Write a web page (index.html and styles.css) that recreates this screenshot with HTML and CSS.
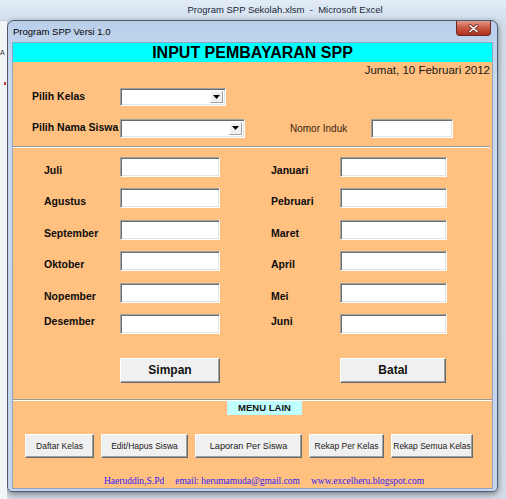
FILE: index.html
```html
<!DOCTYPE html>
<html lang="id">
<head>
  <meta charset="UTF-8" />
  <title>Program SPP Sekolah</title>
  <link rel="stylesheet" href="styles.css">
</head>
<body>
  <div class="excel-bar">Program SPP Sekolah.xlsm&nbsp; - &nbsp;Microsoft Excel</div>

  <div class="desk">
    <div class="sheet-edge">
      <span class="cell-a">A</span>
      <span class="red-dot"></span>
    </div>

    <div class="window">
      <div class="caption">
        <span class="caption-text">Program SPP Versi 1.0</span>
        <span class="close-btn">
          <svg width="11" height="9" viewBox="0 0 11 9">
            <path d="M2 1.5 L9 7.5 M9 1.5 L2 7.5" stroke="#6b2a22" stroke-width="3" stroke-linecap="round"/>
            <path d="M2 1.5 L9 7.5 M9 1.5 L2 7.5" stroke="#fff" stroke-width="1.6" stroke-linecap="round"/>
          </svg>
        </span>
      </div>

      <div class="form">
        <div class="header">INPUT PEMBAYARAN SPP</div>
        <div class="date">Jumat, 10 Februari 2012</div>

        <div class="pick-row row-kelas">
          <label class="lbl pick-lbl">Pilih Kelas</label>
          <div class="combo combo-kelas">
            <span class="combo-btn"><svg width="7" height="4" viewBox="0 0 7 4"><path d="M0 0 H7 L3.5 4 Z" fill="#000"/></svg></span>
          </div>
        </div>

        <div class="pick-row row-siswa">
          <label class="lbl pick-lbl">Pilih Nama Siswa</label>
          <div class="combo combo-siswa">
            <span class="combo-btn"><svg width="7" height="4" viewBox="0 0 7 4"><path d="M0 0 H7 L3.5 4 Z" fill="#000"/></svg></span>
          </div>
          <label class="nomor-lbl">Nomor Induk</label>
          <div class="tbox nomor-box"></div>
        </div>

        <div class="sep sep-top"></div>

        <div class="months">
          <label class="lbl mlbl">Juli</label><div class="tbox"></div>
          <label class="lbl mlbl right">Januari</label><div class="tbox"></div>

          <label class="lbl mlbl">Agustus</label><div class="tbox"></div>
          <label class="lbl mlbl right">Pebruari</label><div class="tbox"></div>

          <label class="lbl mlbl">September</label><div class="tbox"></div>
          <label class="lbl mlbl right">Maret</label><div class="tbox"></div>

          <label class="lbl mlbl">Oktober</label><div class="tbox"></div>
          <label class="lbl mlbl right">April</label><div class="tbox"></div>

          <label class="lbl mlbl">Nopember</label><div class="tbox"></div>
          <label class="lbl mlbl right">Mei</label><div class="tbox"></div>

          <label class="lbl mlbl up">Desember</label><div class="tbox"></div>
          <label class="lbl mlbl right up">Juni</label><div class="tbox"></div>
        </div>

        <div class="actions">
          <button class="btn btn-main btn-simpan">Simpan</button>
          <button class="btn btn-main btn-batal">Batal</button>
        </div>

        <div class="sep sep-bottom"></div>
        <div class="menu-lain">MENU LAIN</div>

        <div class="menu-buttons">
          <button class="btn btn-menu w-daftar">Daftar Kelas</button>
          <button class="btn btn-menu w-edit">Edit/Hapus Siswa</button>
          <button class="btn btn-menu w-laporan">Laporan Per Siswa</button>
          <button class="btn btn-menu w-rekap">Rekap Per Kelas</button>
          <button class="btn btn-menu w-semua">Rekap Semua Kelas</button>
        </div>

        <div class="footer">
          <span>Haeruddin,S.Pd</span>
          <span>email: herumamuda@gmail.com</span>
          <span>www.excelheru.blogspot.com</span>
        </div>
      </div>
    </div>
  </div>
</body>
</html>
```

FILE: styles.css
```css
* {
  box-sizing: border-box;
}
body {
  margin: 0;
  width: 506px;
  height: 499px;
  overflow: hidden;
  background: #d3dce8;
  font-family: 'Liberation Sans', Arial, sans-serif;
  color: #000;
}

.excel-bar {
  height: 20px;
  line-height: 20px;
  padding-left: 64px;
  text-align: center;
  font-size: 9.5px;
  color: #1b2737;
  background: linear-gradient(#e3ecf7, #d2dfee);
}

.desk {
  display: flex;
  height: 479px;
}
.sheet-edge {
  width: 7px;
  background: #f2f4f7;
  border-top: 1px solid #c9d2dd;
  position: relative;
  overflow: hidden;
}
.cell-a {
  position: absolute;
  top: 28px;
  left: 0;
  font-size: 7px;
  color: #333;
}
.red-dot {
  position: absolute;
  top: 61px;
  left: 4px;
  width: 2px;
  height: 3px;
  background: #c0392b;
}

.window {
  width: 491px;
  height: 472px;
  padding: 0 5px 4px;
  border: 1px solid #4f5b6a;
  border-radius: 7px 7px 5px 5px;
  background: linear-gradient(#b9cfea, #c9daef 60px, #c3d6ee);
  box-shadow: 0 2px 6px rgba(0, 0, 0, 0.45);
}
.caption {
  display: flex;
  justify-content: space-between;
  align-items: flex-start;
  height: 22px;
}
.caption-text {
  line-height: 22px;
  font-size: 9.5px;
  color: #000;
}
.close-btn {
  display: flex;
  align-items: center;
  justify-content: center;
  width: 35px;
  height: 15px;
  margin-right: 1px;
  border: 1px solid #6d2a22;
  border-top: none;
  border-radius: 0 0 4px 4px;
  background: linear-gradient(#e3998b, #c9563f 50%, #b0321f);
}

.form {
  height: 445px;
  background: #ffc080;
  box-shadow: 0 0 0 1px #8fa5c2;
}
.header {
  height: 19px;
  line-height: 19px;
  background: #00ffff;
  text-align: center;
  font-size: 16px;
  font-weight: bold;
}
.date {
  height: 16px;
  line-height: 16px;
  padding-right: 2px;
  text-align: right;
  font-size: 11.5px;
  color: #1a1a1a;
}

.lbl {
  font-size: 10.5px;
  font-weight: bold;
  color: #0d0d0d;
  line-height: 13px;
}

.pick-row {
  display: flex;
  align-items: center;
  padding-left: 19px;
}
.row-kelas {
  margin-top: 10px;
  height: 18px;
}
.row-siswa {
  margin-top: 12px;
  height: 20px;
}
.pick-lbl {
  width: 88px;
  padding-bottom: 2px;
}

.combo {
  position: relative;
  background: #fff;
  border: 1px solid;
  border-color: #a0a0a0 #fff #fff #a0a0a0;
  box-shadow: inset 1px 1px 0 #696969, inset -1px -1px 0 #e3e3e3;
}
.combo-kelas {
  width: 106px;
  height: 18px;
}
.combo-siswa {
  width: 125px;
  height: 19px;
}
.combo-btn {
  position: absolute;
  top: 2px;
  right: 2px;
  bottom: 2px;
  width: 13px;
  display: flex;
  align-items: center;
  justify-content: center;
  background: #f0f0f0;
  border: 1px solid;
  border-color: #fff #a0a0a0 #a0a0a0 #fff;
}

.nomor-lbl {
  width: 81px;
  margin-left: 45px;
  font-size: 10px;
  color: #3b2414;
}
.tbox {
  background: #fff;
  border: 1px solid;
  border-color: #a0a0a0 #fff #fff #a0a0a0;
  box-shadow: inset 1px 1px 0 #6e6e6e, inset -1px -1px 0 #e3e3e3;
}
.nomor-box {
  width: 82px;
  height: 19px;
  margin-top: 1px;
}

.sep {
  border-top: 1px solid #9a9a9a;
  border-bottom: 1px solid #fff;
}
.sep-top {
  margin: 8px 2px 0 0;
}
.sep-bottom {
  margin-top: 16px;
}

.months {
  display: grid;
  grid-template-columns: 76px 100px 51px 69px 107px;
  grid-auto-rows: 20px;
  row-gap: 11.4px;
  margin-top: 9px;
  padding-left: 31px;
}
.mlbl {
  padding-top: 7px;
}
.mlbl.right {
  grid-column: 4;
}
.mlbl.up {
  padding-top: 1px;
}

.btn {
  padding: 0;
  background: #f0f0f0;
  border: 1px solid;
  border-color: #fff #696969 #696969 #fff;
  box-shadow: inset -1px -1px 0 #a0a0a0;
  font-family: 'Liberation Sans', Arial, sans-serif;
  color: #111;
}

.actions {
  display: flex;
  margin-top: 24px;
  padding-left: 107px;
  height: 25px;
}
.btn-main {
  font-size: 12px;
  font-weight: bold;
}
.btn-simpan {
  width: 100px;
}
.btn-batal {
  width: 106px;
  margin-left: 120px;
}

.menu-lain {
  width: 75px;
  height: 14px;
  margin-left: 214px;
  line-height: 14px;
  text-align: center;
  background: #c0ffff;
  font-size: 9.5px;
  font-weight: bold;
  color: #141414;
}

.menu-buttons {
  display: flex;
  gap: 7px;
  margin-top: 19px;
  padding-left: 12px;
  height: 24px;
}
.btn-menu {
  font-size: 8.5px;
  color: #1a1a1a;
}
.w-daftar { width: 69px; }
.w-edit { width: 87px; }
.w-laporan { width: 107px; font-size: 9.2px; }
.w-rekap { width: 75px; }
.w-semua { width: 82px; }

.footer {
  display: flex;
  gap: 11px;
  margin-top: 17px;
  height: 12px;
  line-height: 12px;
  padding-left: 91px;
  font-family: 'Liberation Serif', 'Times New Roman', serif;
  font-size: 9.5px;
  color: #3320f0;
}
```
